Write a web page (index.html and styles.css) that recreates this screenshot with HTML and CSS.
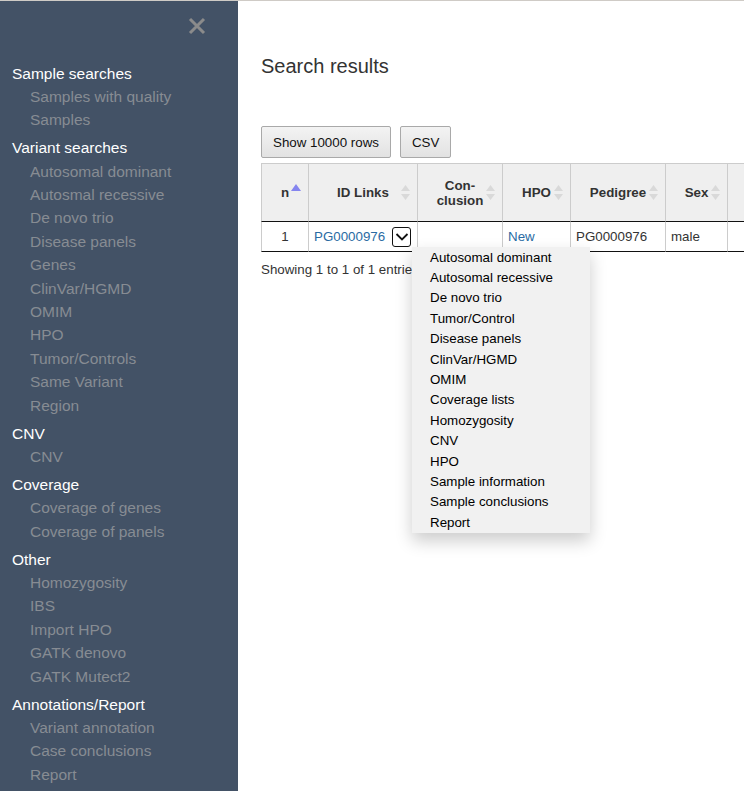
FILE: index.html
```html
<!DOCTYPE html>
<html lang="en">
<head>
<meta charset="utf-8">
<title>Search results</title>
<link rel="stylesheet" href="styles.css">
</head>
<body>
<div class="layout">
  <aside class="sidebar">
    <div class="close-row">
      <svg class="close" width="18" height="18" viewBox="0 0 18 18"><path d="M2 2 L16 16 M16 2 L2 16" stroke="#8b8b8b" stroke-width="3" fill="none"/></svg>
    </div>
    <nav class="nav">
      <div class="group">
        <div class="head">Sample searches</div>
        <div class="item">Samples with quality</div>
        <div class="item">Samples</div>
      </div>
      <div class="group">
        <div class="head">Variant searches</div>
        <div class="item">Autosomal dominant</div>
        <div class="item">Autosmal recessive</div>
        <div class="item">De novo trio</div>
        <div class="item">Disease panels</div>
        <div class="item">Genes</div>
        <div class="item">ClinVar/HGMD</div>
        <div class="item">OMIM</div>
        <div class="item">HPO</div>
        <div class="item">Tumor/Controls</div>
        <div class="item">Same Variant</div>
        <div class="item">Region</div>
      </div>
      <div class="group">
        <div class="head">CNV</div>
        <div class="item">CNV</div>
      </div>
      <div class="group">
        <div class="head">Coverage</div>
        <div class="item">Coverage of genes</div>
        <div class="item">Coverage of panels</div>
      </div>
      <div class="group">
        <div class="head">Other</div>
        <div class="item">Homozygosity</div>
        <div class="item">IBS</div>
        <div class="item">Import HPO</div>
        <div class="item">GATK denovo</div>
        <div class="item">GATK Mutect2</div>
      </div>
      <div class="group">
        <div class="head">Annotations/Report</div>
        <div class="item">Variant annotation</div>
        <div class="item">Case conclusions</div>
        <div class="item">Report</div>
      </div>
    </nav>
  </aside>
  <main class="main">
    <h1 class="title">Search results</h1>
    <div class="buttons">
      <button class="btn">Show 10000 rows</button>
      <button class="btn">CSV</button>
    </div>
    <table class="results">
      <thead>
        <tr>
          <th class="c-n">n<svg class="sort-asc" width="10" height="7" viewBox="0 0 10 7"><path d="M5 0 L10 7 H0 Z" fill="#8585ef"/></svg></th>
          <th class="c-id">ID Links<svg class="sort" width="9" height="15" viewBox="0 0 9 15"><path d="M4.5 0 L9 6 H0 Z M0 9 H9 L4.5 15 Z" fill="#d9d9d9"/></svg></th>
          <th class="c-con">Con-<br>clusion<svg class="sort" width="9" height="15" viewBox="0 0 9 15"><path d="M4.5 0 L9 6 H0 Z M0 9 H9 L4.5 15 Z" fill="#d9d9d9"/></svg></th>
          <th class="c-hpo">HPO<svg class="sort" width="9" height="15" viewBox="0 0 9 15"><path d="M4.5 0 L9 6 H0 Z M0 9 H9 L4.5 15 Z" fill="#d9d9d9"/></svg></th>
          <th class="c-ped">Pedigree<svg class="sort" width="9" height="15" viewBox="0 0 9 15"><path d="M4.5 0 L9 6 H0 Z M0 9 H9 L4.5 15 Z" fill="#d9d9d9"/></svg></th>
          <th class="c-sex">Sex<svg class="sort" width="9" height="15" viewBox="0 0 9 15"><path d="M4.5 0 L9 6 H0 Z M0 9 H9 L4.5 15 Z" fill="#d9d9d9"/></svg></th>
          <th class="c-more"></th>
        </tr>
      </thead>
      <tbody>
        <tr>
          <td class="num">1</td>
          <td>
            <div class="idcell">
              <a class="link" href="#">PG0000976</a>
              <div class="dd">
                <span class="toggle"><svg width="16" height="17" viewBox="0 0 16 17"><path d="M2.5 6 L8 11.5 L13.5 6" stroke="#111" stroke-width="1.8" fill="none"/></svg></span>
                <div class="menu">
                  <div class="mi">Autosomal dominant</div>
                  <div class="mi">Autosomal recessive</div>
                  <div class="mi">De novo trio</div>
                  <div class="mi">Tumor/Control</div>
                  <div class="mi">Disease panels</div>
                  <div class="mi">ClinVar/HGMD</div>
                  <div class="mi">OMIM</div>
                  <div class="mi">Coverage lists</div>
                  <div class="mi">Homozygosity</div>
                  <div class="mi">CNV</div>
                  <div class="mi">HPO</div>
                  <div class="mi">Sample information</div>
                  <div class="mi">Sample conclusions</div>
                  <div class="mi">Report</div>
                </div>
              </div>
            </div>
          </td>
          <td></td>
          <td><a class="link" href="#">New</a></td>
          <td>PG0000976</td>
          <td>male</td>
          <td></td>
        </tr>
      </tbody>
    </table>
    <div class="info">Showing 1 to 1 of 1 entries</div>
  </main>
</div>
</body>
</html>
```
FILE: styles.css
```css
html, body {
  margin: 0;
  padding: 0;
  height: 100%;
  overflow: hidden;
}
body {
  font-family: "Liberation Sans", Arial, sans-serif;
  background: #fff;
  color: #333;
  border-top: 1px solid #cfcbc6;
  box-sizing: border-box;
}
.layout {
  display: flex;
  height: 100%;
}
.sidebar {
  width: 238px;
  flex: 0 0 238px;
  background: #435266;
  font-size: 15.5px;
  line-height: 23.4px;
}
.close-row {
  height: 50px;
  display: flex;
  align-items: center;
  justify-content: flex-end;
  padding-right: 32px;
}
.close { display: block; }
.nav {
  padding-top: 6px;
}
.group {
  margin-top: 4.5px;
}
.head {
  color: #fff;
  padding-left: 12px;
  white-space: nowrap;
}
.item {
  color: #878c93;
  padding-left: 30px;
  white-space: nowrap;
}
.main {
  flex: 1;
  min-width: 0;
  padding: 54px 0 0 23px;
  overflow: hidden;
  position: relative;
}
.title {
  margin: 0;
  font-size: 20px;
  line-height: 22px;
  font-weight: normal;
  color: #333;
}
.buttons {
  display: flex;
  gap: 9px;
  margin-top: 49px;
}
.btn {
  height: 32px;
  padding: 0 11px;
  font-family: "Liberation Sans", Arial, sans-serif;
  font-size: 13.33px;
  color: #111;
  border: 1px solid #a9a9a9;
  border-radius: 2px;
  background: linear-gradient(to bottom, #f3f3f3 0%, #e2e2e2 100%);
}
.results {
  margin-top: 5px;
  border-collapse: separate;
  border-spacing: 0;
  table-layout: fixed;
  width: 606px;
  font-size: 13.33px;
}
.results th {
  box-sizing: border-box;
  position: relative;
  height: 59px;
  background: #efefef;
  border-top: 1px solid #cccccc;
  border-left: 1px solid #cccccc;
  border-bottom: 1px solid #111;
  font-weight: bold;
  color: #333;
  text-align: center;
  vertical-align: middle;
  line-height: 15px;
  padding: 0 8px;
}
.c-n { width: 47px; }
.c-id { width: 109px; }
.c-con { width: 85px; }
.c-hpo { width: 68px; }
.c-ped { width: 95px; }
.c-sex { width: 62px; }
.c-more { width: 140px; }
.sort {
  position: absolute;
  right: 7px;
  top: 50%;
  margin-top: -7.5px;
}
.sort-asc {
  position: absolute;
  right: 7px;
  top: 20px;
}
.results td {
  box-sizing: border-box;
  height: 30px;
  border-left: 1px solid #cccccc;
  border-bottom: 1px solid #111;
  padding: 0 5px;
  vertical-align: middle;
  color: #333;
  white-space: nowrap;
}
.results td.num { text-align: center; }
.link {
  color: #2a6ba3;
  text-decoration: none;
}
.idcell {
  display: flex;
  align-items: center;
  justify-content: space-between;
  padding-right: 1px;
}
.dd {
  position: relative;
}
.toggle {
  display: flex;
  align-items: center;
  justify-content: center;
  width: 19px;
  height: 20px;
  box-sizing: border-box;
  border: 1.5px solid #111;
  border-radius: 3px;
  background: #fff;
}
.menu {
  position: absolute;
  left: calc(100% + 1px);
  top: 100%;
  width: 178px;
  padding-top: 1px;
  background: #f1f1f1;
  box-shadow: 0 8px 16px 0 rgba(0, 0, 0, 0.2);
  z-index: 5;
}
.mi {
  padding-left: 18px;
  height: 20.42px;
  line-height: 20.42px;
  font-size: 13.33px;
  color: #000;
  white-space: nowrap;
}
.info {
  margin-top: 10px;
  font-size: 13.33px;
  line-height: 16px;
  color: #333;
}
```
